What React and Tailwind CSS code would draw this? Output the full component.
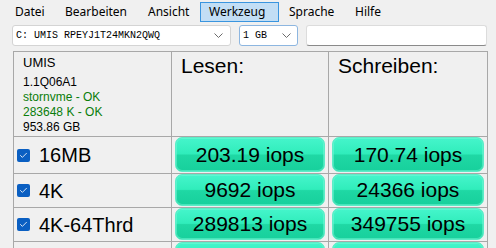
import { Check } from 'lucide-react';

const menus = [
  { label: 'Datei', w: 'w-[50px]' },
  { label: 'Bearbeiten', w: 'w-[83px]' },
  { label: 'Ansicht', w: 'w-[60px]' },
  { label: 'Werkzeug', w: 'w-[79px]', active: true },
  { label: 'Sprache', w: 'w-[66px]' },
  { label: 'Hilfe', w: 'w-[44px]' },
];

const rows = [
  { label: '16MB', read: '203.19 iops', write: '170.74 iops', h: 'h-[36px]' },
  { label: '4K', read: '9692 iops', write: '24366 iops', h: 'h-[33px]' },
  { label: '4K-64Thrd', read: '289813 iops', write: '349755 iops', h: 'h-[33px]' },
  { label: '', read: '', write: '', h: 'h-[33px]' },
];

function Chevron() {
  return (
    <svg width="9" height="5" viewBox="0 0 9 5" className="shrink-0">
      <path d="M0.5 0.5 L4.5 4.5 L8.5 0.5" fill="none" stroke="#6b6b6b" strokeWidth="1" />
    </svg>
  );
}

function Result({ value }) {
  return (
    <div className="h-full px-[3px] pb-[1px]">
      <div className="h-full rounded-[7px] border border-[#5cecc7] bg-[linear-gradient(to_bottom,#45f5cb_0%,#30edbb_48%,#1fd8a4_52%,#17d09c_100%)] shadow-[inset_0_0_0_1px_rgba(120,250,215,0.5)] flex items-center justify-center text-[21px] text-black">
        {value}
      </div>
    </div>
  );
}

export default function App() {
  return (
    <div className="w-[496px] h-[248px] overflow-hidden bg-[#f0f0f0] font-['Liberation_Sans',Arial,sans-serif]">
      {/* menu */}
      <div className="h-[24px] flex pl-[7px] pt-[2px] font-['Noto_Sans',sans-serif] text-[12px] text-black">
        {menus.map((m) => (
          <div
            key={m.label}
            className={`${m.w} h-[20px] pl-[8px] flex items-center ${
              m.active ? 'bg-[#c2def5] border border-[#3a95df] pl-[7px] mr-[2px]' : ''
            }`}
          >
            {m.label}
          </div>
        ))}
      </div>

      {/* drive / size selectors */}
      <div className="flex items-start pt-[1px] pl-[12px] h-[27px] font-['Liberation_Mono',monospace] text-[10px] text-black">
        <div className="w-[219px] h-[21px] bg-white border border-[#d4d4d4] rounded-[3px] flex items-center justify-between pl-[3px] pr-[7px]">
          <span>C: UMIS RPEYJ1T24MKN2QWQ</span>
          <Chevron />
        </div>
        <div className="ml-[8px] w-[59px] h-[21px] bg-white border border-[#8db6e0] rounded-[3px] flex items-center justify-between pl-[3px] pr-[6px]">
          <span>1 GB</span>
          <Chevron />
        </div>
        <div className="ml-[8px] w-[181px] h-[21px] bg-white border border-[#dcdcdc] border-b-[#8a8a8a] rounded-[3px]" />
      </div>

      {/* results table */}
      <div className="ml-[13px] w-[475px] grid grid-cols-[157px_156px_158px] gap-px bg-[#a8a8a8] border border-[#a8a8a8]">
        <div className="h-[84px] bg-[#f0f0f0] pl-[9px]">
          <div className="text-[13px] leading-[22px] text-black">UMIS</div>
          <div className="mt-[1px] text-[12px] leading-[15px]">
            <div className="text-black">1.1Q06A1</div>
            <div className="text-[#0a7d0a]">stornvme - OK</div>
            <div className="text-[#0a7d0a]">283648 K - OK</div>
            <div className="text-black">953.86 GB</div>
          </div>
        </div>
        <div className="h-[84px] bg-[#f0f0f0] pl-[9px] pt-[2px] text-[21px] leading-[24px] text-black">Lesen:</div>
        <div className="h-[84px] bg-[#f0f0f0] pl-[9px] pt-[2px] text-[21px] leading-[24px] text-black">Schreiben:</div>

        {rows.map((r, i) => (
          <div key={i} className="contents">
            <div className={`${r.h} bg-[#f0f0f0] pl-[3px] flex items-center`}>
              {r.label && (
                <>
                  <span className="w-[13px] h-[13px] rounded-[2px] bg-[#0a5fc2] flex items-center justify-center">
                    <Check size={9} strokeWidth={2.2} color="#ffffff" />
                  </span>
                  <span className="ml-[9px] text-[20px] text-black">{r.label}</span>
                </>
              )}
            </div>
            <div className={`${r.h} bg-[#f0f0f0]`}>
              <Result value={r.read} />
            </div>
            <div className={`${r.h} bg-[#f0f0f0]`}>
              <Result value={r.write} />
            </div>
          </div>
        ))}
      </div>
    </div>
  );
}
